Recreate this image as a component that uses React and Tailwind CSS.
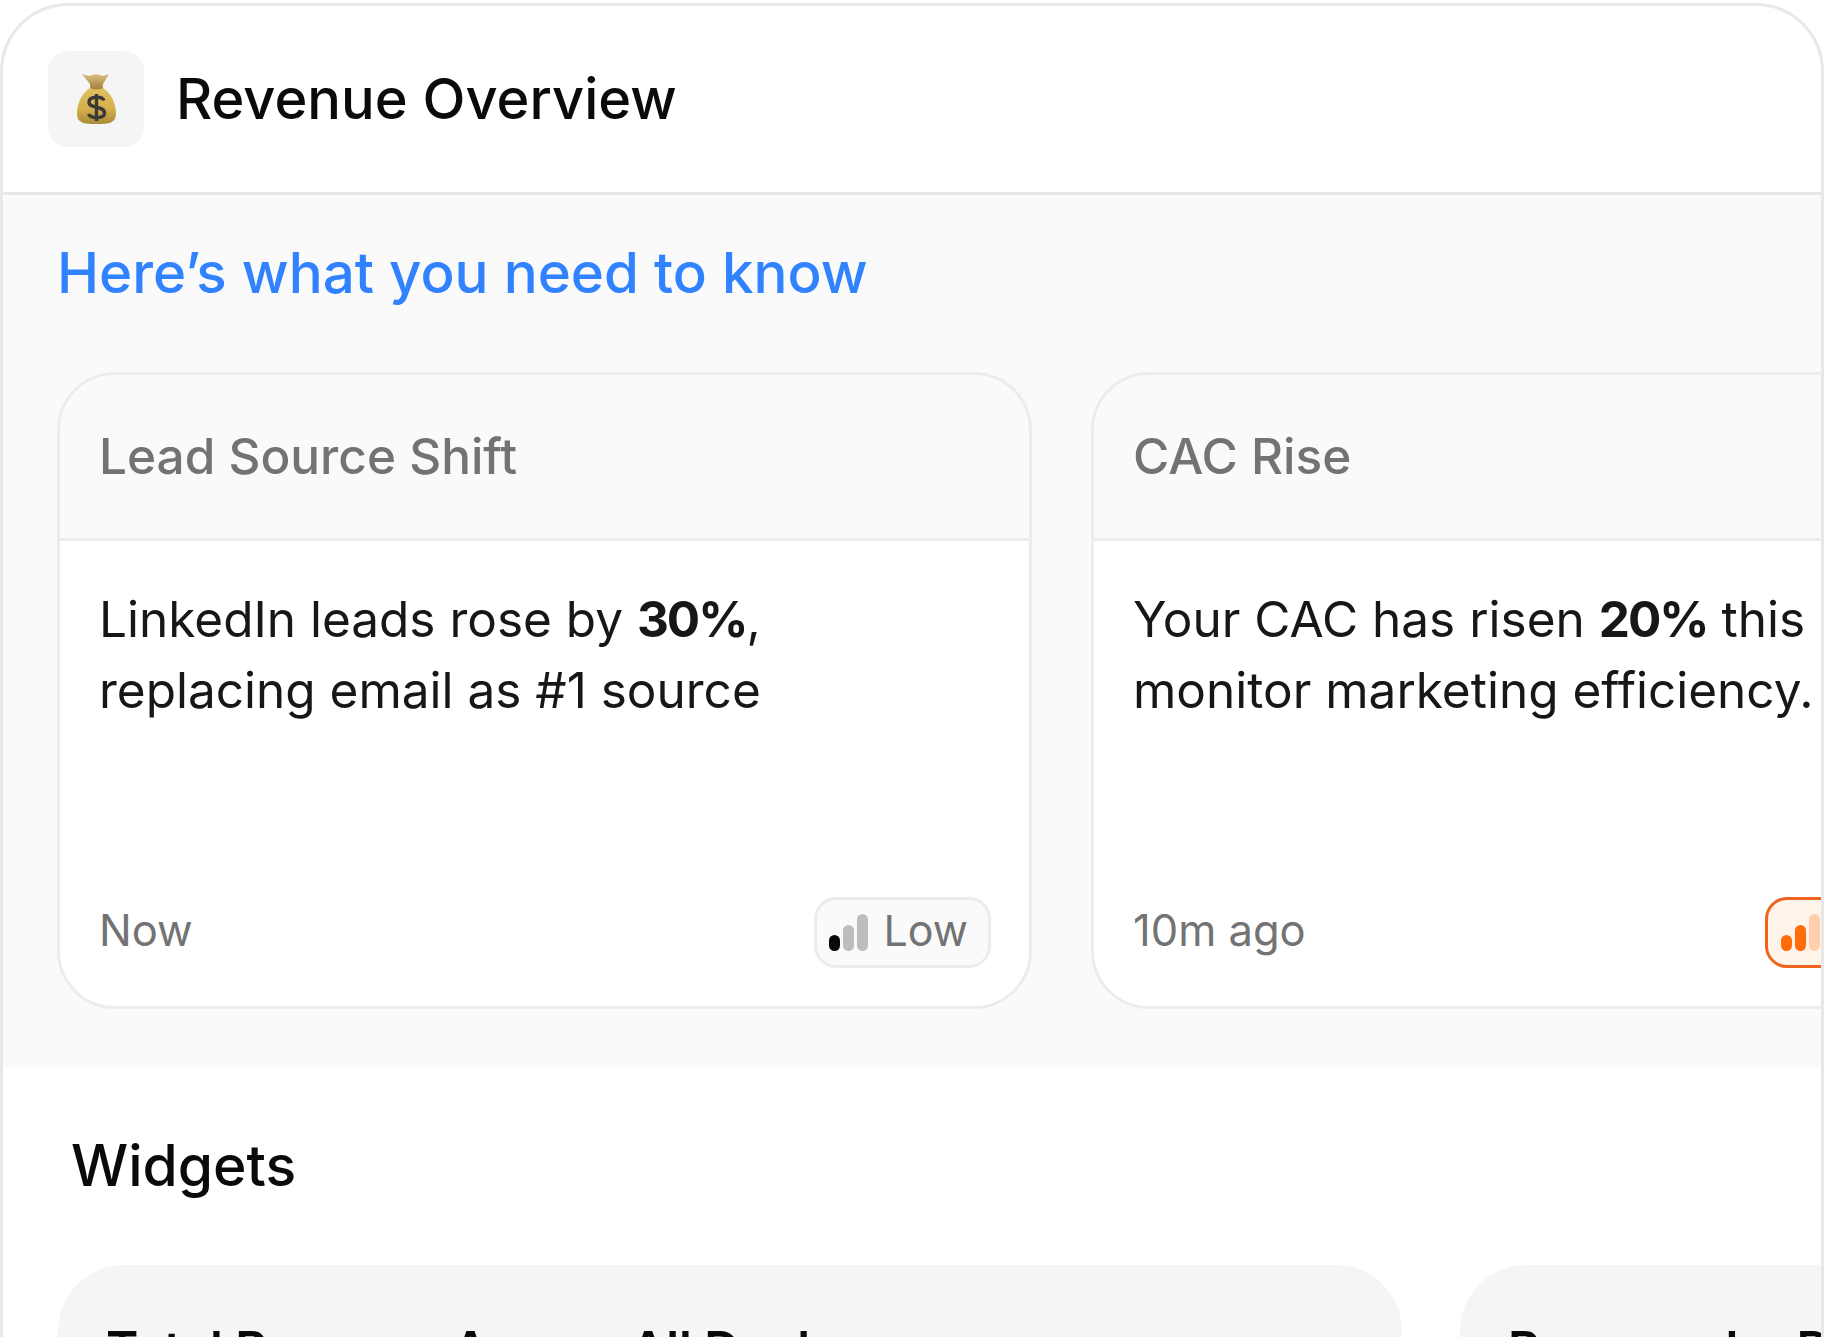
function MoneyBag() {
  return (
    <svg width="41" height="51" viewBox="0 0 41 51">
      <defs>
        <linearGradient id="bag" x1="0" y1="0" x2="0" y2="1">
          <stop offset="0" stopColor="#e2c161" />
          <stop offset="0.6" stopColor="#d3ae4c" />
          <stop offset="1" stopColor="#a98a34" />
        </linearGradient>
        <linearGradient id="neck" x1="0" y1="0" x2="0" y2="1">
          <stop offset="0" stopColor="#dcbd7c" />
          <stop offset="1" stopColor="#9c7a35" />
        </linearGradient>
      </defs>
      <path d="M6 0 L13 2 L20 0 L27 2 L33 0 L27 10 Q26 13 28 17 L13 17 Q15 13 14 10 Z" fill="url(#neck)" />
      <path d="M14 14 Q20.5 17 27 14 C35 19 40 29 40 40 C40 49 33 50 20.5 50 C8 50 1 49 1 40 C1 29 6 19 14 14 Z" fill="url(#bag)" />
      <path d="M28 26.5 C26.5 22.5 13.5 21.5 13 28 C12.7 35 28.5 31.5 28.5 39 C28.5 45 15 45 12.5 40 M20.5 20 L20.5 47" fill="none" stroke="#3c3a36" strokeWidth="3.4" />
    </svg>
  );
}

function Bars({ a, b, c }) {
  return (
    <div className="flex items-end gap-[3px] shrink-0">
      <span className={`w-[11px] h-[16px] rounded-full ${a}`}></span>
      <span className={`w-[11px] h-[26px] rounded-full ${b}`}></span>
      <span className={`w-[11px] h-[37px] rounded-full ${c}`}></span>
    </div>
  );
}

function InsightCard({ title, time, badge, children }) {
  return (
    <div className="w-[975px] h-[637px] shrink-0 flex flex-col rounded-[58px] border-[3px] border-[#ececec] overflow-hidden">
      <div className="h-[166px] shrink-0 flex items-center pl-[39px] pr-[38px] border-b-[3px] border-[#ececec] text-[49.5px] font-medium text-[#737373]">
        {title}
      </div>
      <div className="flex-1 flex flex-col justify-between bg-white pl-[39px] pr-[38px] pt-[43px] pb-[38px]">
        <p className="text-[49.5px] leading-[71px] text-[#171717] whitespace-nowrap">{children}</p>
        <div className="flex items-center justify-between">
          <span className="text-[43.5px] text-[#737373] -translate-y-[2px]">{time}</span>
          {badge}
        </div>
      </div>
    </div>
  );
}

export default function App() {
  return (
    <div className="w-[1824px] h-[1337px] overflow-hidden bg-white font-['Inter',sans-serif]">
      <div className="h-[1400px] mt-[3px] rounded-t-[68px] border-x-[3px] border-t-[3px] border-[#e8e8e8] overflow-hidden">
        <div className="h-[189px] flex items-center gap-[32px] px-[45px] border-b-[3px] border-[#e8e8e8]">
          <div className="w-[96px] h-[96px] rounded-[20px] bg-[#f5f5f5] flex items-center justify-center">
            <MoneyBag />
          </div>
          <h1 className="text-[56px] font-medium text-[#0a0a0a]">Revenue Overview</h1>
        </div>
        <div className="h-[872px] bg-[#fafafa] rounded-tl-[8px] pl-[54px] pt-[46px] overflow-hidden">
          <h2 className="text-[56.5px] font-medium leading-[64px] text-[#3182ff] h-[131px]">Here’s what you need to know</h2>
          <div className="flex gap-[59px]">
            <InsightCard
              title="Lead Source Shift"
              time="Now"
              badge={
                <div className="h-[71px] flex items-center gap-[15px] pl-[12px] pr-[20px] rounded-[22px] border-[3px] border-[#ececec] bg-[#fafafa] text-[43px] text-[#737373]">
                  <Bars a="bg-[#0a0a0a]" b="bg-[#bdbdbd]" c="bg-[#bdbdbd]" />
                  <span className="-translate-y-[2px]">Low</span>
                </div>
              }
            >
              LinkedIn leads rose by <span className="font-bold tracking-[-2px]">30%</span>,<br />
              replacing email as #1 source
            </InsightCard>
            <InsightCard
              title="CAC Rise"
              time="10m ago"
              badge={
                <div className="h-[71px] flex items-center gap-[15px] pl-[13px] pr-[23px] rounded-[22px] border-[3px] border-[#f0641e] bg-[#fff4ea] text-[43px] text-[#f0641e]">
                  <Bars a="bg-[#ff6c0a]" b="bg-[#ff6c0a]" c="bg-[#ffcfae]" />
                  <span className="-translate-y-[2px]">Medium</span>
                </div>
              }
            >
              Your CAC has risen <span className="font-bold tracking-[-2px]">20%</span> this<br />
              monitor marketing efficiency.
            </InsightCard>
          </div>
        </div>
        <div className="pl-[68px] pt-[65px]">
          <h2 className="text-[57px] leading-[68px] text-[#0a0a0a] font-medium">Widgets</h2>
        </div>
        <div className="flex gap-[58px] pl-[55px] mt-[65px]">
          <div className="w-[1344px] h-[300px] shrink-0 rounded-[66px] bg-[#f5f5f5] pl-[48px] pt-[48px] text-[49px] font-semibold text-[#0a0a0a]">
            Total Revenue Across All Deals
          </div>
          <div className="w-[1344px] h-[300px] shrink-0 rounded-[66px] bg-[#f5f5f5] pl-[48px] pt-[48px] text-[49px] font-semibold text-[#0a0a0a]">
            Revenue by Product
          </div>
        </div>
      </div>
    </div>
  );
}
